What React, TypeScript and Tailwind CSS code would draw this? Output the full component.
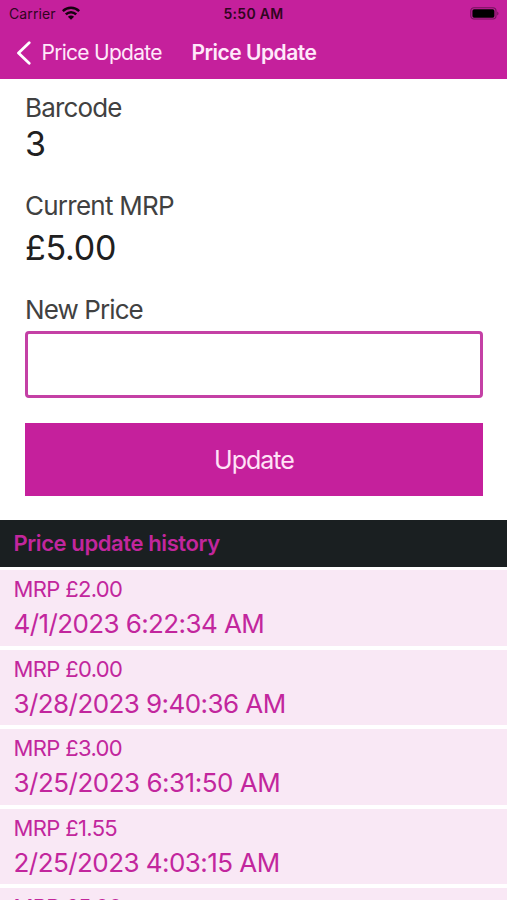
type Entry = { price: string; date?: string; dateTracking: string };

const history: Entry[] = [
  { price: "MRP £2.00", date: "4/1/2023 6:22:34 AM", dateTracking: "tracking-[-0.6px]" },
  { price: "MRP £0.00", date: "3/28/2023 9:40:36 AM", dateTracking: "tracking-[-0.57px]" },
  { price: "MRP £3.00", date: "3/25/2023 6:31:50 AM", dateTracking: "tracking-[-0.5px]" },
  { price: "MRP £1.55", date: "2/25/2023 4:03:15 AM", dateTracking: "tracking-[-0.55px]" },
  { price: "MRP £5.00", dateTracking: "tracking-[-0.6px]" },
];

function WifiIcon() {
  return (
    <svg className="ml-[6px] h-[14px] w-[18px] -translate-y-px" viewBox="0 0 18 14" fill="none" stroke="#16020f" strokeWidth="2.5">
      <path d="M0.8 5.1C5.4 0.5 12.6 0.5 17.2 5.1" />
      <path d="M3.8 8.3C6.8 5.4 11.2 5.4 14.2 8.3" />
      <path d="M9 13.8L5.9 10.7C7.6 9.1 10.4 9.1 12.1 10.7Z" fill="#16020f" stroke="none" />
    </svg>
  );
}

function BatteryIcon() {
  return (
    <svg className="h-[13px] w-[30px]" viewBox="0 0 30 13">
      <rect x="0.8" y="0.8" width="25.2" height="11.2" rx="3.2" fill="none" stroke="#000" strokeOpacity="0.42" strokeWidth="1.1" />
      <rect x="2.4" y="2.2" width="22" height="8.5" rx="1.7" fill="#000" />
      <path d="M27.3 4.4C28.8 5 28.8 7.8 27.3 8.4Z" fill="#000" fillOpacity="0.45" />
    </svg>
  );
}

function StatusBar() {
  return (
    <div className="grid h-[27px] grid-cols-3 items-center pr-[7px] pl-[9px] text-[14px] leading-[27px] text-[#30051f]">
      <div className="flex items-center">
        <span className="tracking-[0.1px]">Carrier</span>
        <WifiIcon />
      </div>
      <span className="pr-[2px] text-center font-semibold tracking-[0.3px]">5:50 AM</span>
      <div className="flex justify-end">
        <BatteryIcon />
      </div>
    </div>
  );
}

export default function App() {
  return (
    <div className="flex h-[900px] w-[507px] flex-col overflow-hidden bg-white font-['Inter',sans-serif]">
      <header className="h-[79px] shrink-0 bg-[#c5209c]">
        <StatusBar />
        <div className="flex h-[51px] items-center text-[21px] leading-[51px] text-[#ffe9fa]">
          <svg className="ml-[16px] h-[24px] w-[16px]" viewBox="0 0 16 24" fill="none" stroke="#fff" strokeWidth="2.8" strokeLinecap="round" strokeLinejoin="round">
            <path d="M13.2 1.8L2.5 12L13.2 22.2" />
          </svg>
          <span className="ml-[9.5px] w-[150px] tracking-[-0.73px]">Price Update</span>
          <h1 className="font-semibold tracking-[-0.5px]">Price Update</h1>
        </div>
      </header>

      <main className="flex shrink-0 flex-col pr-[24px] pl-[25px] pt-[13px] text-[26px] text-[#414141]">
        <label className="h-8 leading-8 tracking-[-0.85px]">Barcode</label>
        <p className="h-10 text-[34px] leading-10 text-[#202020]">3</p>
        <label className="mt-[26px] h-8 leading-8 tracking-[-0.75px]">Current MRP</label>
        <p className="mt-[6px] h-10 text-[34px] leading-10 tracking-[-0.2px] text-[#202020]">£5.00</p>
        <label className="mt-[26px] h-8 leading-8 tracking-[-0.9px]">New Price</label>
        <input className="mt-[5px] h-[67px] w-full rounded-[4px] border-[3px] border-[#c440a5] bg-white px-3 outline-none" />
        <button className="mt-[24.5px] h-[73.5px] w-full bg-[#c5209c] pt-[2px] text-[25px] tracking-[-1px] text-[#ffe3f7]">Update</button>
      </main>

      <section className="mt-[24px] text-[#c2269d]">
        <h2 className="h-[47px] bg-[#1a1f21] pl-[13.5px] text-[22px] leading-[47px] font-semibold tracking-[-0.4px]">Price update history</h2>
        <ul className="mt-[3px] flex flex-col gap-[4px]">
          {history.map((entry) => (
            <li key={entry.price} className="h-[75.5px] bg-[#f9e8f5] pt-[5px] pl-[13.5px]">
              <p className="h-[29px] text-[22px] leading-[29px] tracking-[-0.65px]">{entry.price}</p>
              {entry.date && (
                <p className={`mt-[4.4px] h-[32px] text-[26px] leading-[32px] ${entry.dateTracking}`}>{entry.date}</p>
              )}
            </li>
          ))}
        </ul>
      </section>
    </div>
  );
}
